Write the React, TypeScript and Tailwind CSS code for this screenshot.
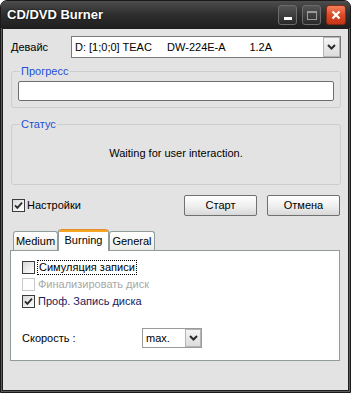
import React from "react";

function Check({ checked, disabled }: { checked?: boolean; disabled?: boolean }) {
  return (
    <span
      className={
        disabled
          ? "w-[13px] h-[13px] shrink-0 border border-[#c8c8c8] bg-white"
          : "w-[13px] h-[13px] shrink-0 border border-[#3c3c3c] bg-gradient-to-br from-[#d8d8d8] to-white flex items-center justify-center"
      }
    >
      {checked && (
        <svg width="9" height="9" viewBox="0 0 9 9">
          <path d="M1 4.3 L3.4 6.8 L8 1.6" stroke="#2a2a2a" strokeWidth="1.8" fill="none" />
        </svg>
      )}
    </span>
  );
}

function Chevron() {
  return (
    <svg width="9" height="6" viewBox="0 0 9 6">
      <path d="M1 1 L4.5 4.5 L8 1" stroke="#2b2b2b" strokeWidth="2" fill="none" />
    </svg>
  );
}

function TitleBar() {
  return (
    <div className="h-[27px] flex items-center justify-between pl-[6px] pr-[4px] rounded-t-[6px] bg-gradient-to-b from-[#4d4d4d] via-[#2e2e2e] to-[#1f1f1f]">
      <span className="text-white font-bold text-[13px] [text-shadow:0_0_2px_#000]">CD/DVD Burner</span>
      <div className="flex gap-[5px] mt-[1px]">
        <div className="w-[19px] h-[20px] rounded-[3px] border border-[#6c6c6c] bg-gradient-to-b from-[#555] to-[#2a2a2a] flex items-end justify-center pb-[4px]">
          <div className="w-[8px] h-[3px] bg-white" />
        </div>
        <div className="w-[19px] h-[20px] rounded-[3px] border border-[#6c6c6c] bg-gradient-to-b from-[#555] to-[#2a2a2a] flex items-center justify-center">
          <div className="w-[10px] h-[9px] border border-[#9a9a9a] border-t-[2px]" />
        </div>
        <div className="w-[20px] h-[20px] rounded-[3px] border border-[#8a2a14] bg-gradient-to-b from-[#f2805e] via-[#dc4a26] to-[#c5361a] flex items-center justify-center">
          <svg width="10" height="10" viewBox="0 0 10 10">
            <path d="M1.5 1.5 L8.5 8.5 M8.5 1.5 L1.5 8.5" stroke="white" strokeWidth="2.2" />
          </svg>
        </div>
      </div>
    </div>
  );
}

function Button({ label }: { label: string }) {
  return (
    <div className="h-[21px] w-[73px] border border-[#707070] rounded-[2px] bg-gradient-to-b from-white via-[#f0f0f0] to-[#d8d8d8] flex items-center justify-center">
      {label}
    </div>
  );
}

export default function App() {
  return (
    <div className="w-[351px] h-[393px] bg-[#5a5a5a] border border-[#1a1a1a] rounded-t-[7px] flex flex-col font-['Liberation_Sans',Arial,sans-serif] text-[11px] leading-[13px] text-black">
      <TitleBar />
      <div className="flex-1 mx-[1px] mb-[1px] border border-[#1e1e1e] bg-[#e3e3e3] flex flex-col pl-[8px] pr-[7px]">
        {/* device */}
        <div className="flex items-center mt-[7px] h-[22px]">
          <span className="w-[60px]">Девайс</span>
          <div className="flex-1 h-[22px] border border-[#7a7a7a] bg-white flex items-center">
            <span className="flex-1 pl-[3px] whitespace-pre">D: [1;0;0] TEAC     DW-224E-A        1.2A</span>
            <div className="w-[17px] h-[20px] border border-[#b5b5b5] bg-gradient-to-b from-[#f4f4f4] to-[#dcdcdc] flex items-center justify-center">
              <Chevron />
            </div>
          </div>
        </div>

        {/* progress */}
        <fieldset className="mt-[7px] border border-[#cdcdcd] rounded-[3px] px-[6px] pt-[3px] pb-[6px]">
          <legend className="ml-[2px] px-[1px] text-[#1f4fd8]">Прогресс</legend>
          <div className="h-[20px] border border-[#6e6e6e] rounded-[2px] bg-white" />
        </fieldset>

        {/* status */}
        <fieldset className="mt-[10px] border border-[#cdcdcd] rounded-[3px] pt-[16px] pb-[24px]">
          <legend className="ml-[8px] px-[1px] text-[#1f4fd8]">Статус</legend>
          <div className="text-center">Waiting for user interaction.</div>
        </fieldset>

        {/* settings + buttons */}
        <div className="flex items-center justify-between mt-[10px] pl-[1px] pr-[1px]">
          <div className="flex items-center gap-[2px]">
            <Check checked />
            <span>Настройки</span>
          </div>
          <div className="flex gap-[10px]">
            <Button label="Старт" />
            <Button label="Отмена" />
          </div>
        </div>

        {/* tabs */}
        <div className="mt-[13px] -ml-[1px] mr-[1px] flex flex-col">
          <div className="flex items-end h-[21px] pl-[3px]">
            <div className="w-[45px] h-[19px] border border-b-0 border-[#919b9c] rounded-t-[3px] bg-gradient-to-b from-white to-[#ebebe6] flex items-center justify-center">Medium</div>
            <div className="w-[51px] h-[22px] -mb-[1px] border-x border-[#919b9c] rounded-t-[3px] bg-white flex flex-col relative z-10">
              <div className="h-[3px] rounded-t-[3px] bg-[#f5a623] border-t border-[#e68b2c]" />
              <div className="flex-1 flex items-center justify-center pb-[3px]">Burning</div>
            </div>
            <div className="w-[46px] h-[19px] border border-b-0 border-[#919b9c] rounded-t-[3px] bg-gradient-to-b from-white to-[#ebebe6] flex items-center justify-center">General</div>
          </div>
          <div className="h-[111px] border border-[#919b9c] bg-white flex flex-col pl-[11px] pt-[9px]">
            <div className="flex items-center gap-[2px] h-[14px]">
              <Check />
              <span className="border border-dotted border-black px-[1px]">Симуляция записи</span>
            </div>
            <div className="flex items-center gap-[3px] h-[14px] mt-[3px]">
              <Check disabled />
              <span className="text-[#a8a8a8]">Финализировать диск</span>
            </div>
            <div className="flex items-center gap-[3px] h-[14px] mt-[3px]">
              <Check checked />
              <span className="text-[#1a1a60]">Проф. Запись диска</span>
            </div>
            <div className="flex items-center mt-[20px]">
              <span className="w-[120px]">Скорость :</span>
              <div className="w-[60px] h-[20px] border border-[#9a9a9a] bg-white flex items-center">
                <span className="flex-1 pl-[3px]">max.</span>
                <div className="w-[16px] h-[18px] border border-[#b5b5b5] bg-gradient-to-b from-[#f4f4f4] to-[#dcdcdc] flex items-center justify-center">
                  <Chevron />
                </div>
              </div>
            </div>
          </div>
        </div>
      </div>
    </div>
  );
}
